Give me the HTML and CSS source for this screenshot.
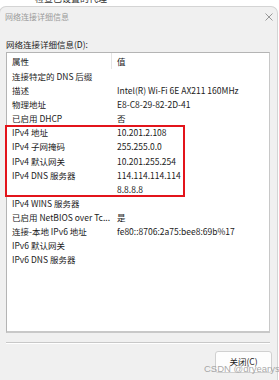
FILE: index.html
```html
<!DOCTYPE html>
<html lang="zh-CN">
<head>
    <meta charset="UTF-8">
    <meta name="viewport" content="width=device-width, initial-scale=1.0">
    <title>网络连接详细信息</title>
    <link rel="stylesheet" href="styles.css">
</head>
<body>
    <div class="behind"><span>检查已设置的代理…</span></div>

    <div class="dialog">
        <div class="titlebar">
            <span class="title">网络连接详细信息</span>
            <svg class="close" width="8" height="8" viewBox="0 0 8 8">
                <path d="M0.5 0.5 L7.5 7.5 M7.5 0.5 L0.5 7.5" stroke="#8c8c8c" stroke-width="0.9" fill="none"/>
            </svg>
        </div>

        <div class="content">
            <div class="caption">网络连接详细信息(D):</div>

            <div class="listbox">
                <div class="row head">
                    <div class="prop">属性</div>
                    <div class="val">值</div>
                </div>
                <div class="row"><div class="prop">连接特定的 DNS 后缀</div><div class="val"></div></div>
                <div class="row"><div class="prop">描述</div><div class="val">Intel(R) Wi-Fi 6E AX211 160MHz</div></div>
                <div class="row"><div class="prop">物理地址</div><div class="val">E8-C8-29-82-2D-41</div></div>
                <div class="row"><div class="prop">已启用 DHCP</div><div class="val">否</div></div>
                <div class="row"><div class="prop">IPv4 地址</div><div class="val">10.201.2.108</div></div>
                <div class="row"><div class="prop">IPv4 子网掩码</div><div class="val">255.255.0.0</div></div>
                <div class="row"><div class="prop">IPv4 默认网关</div><div class="val">10.201.255.254</div></div>
                <div class="row"><div class="prop">IPv4 DNS 服务器</div><div class="val">114.114.114.114</div></div>
                <div class="row"><div class="prop"></div><div class="val">8.8.8.8</div></div>
                <div class="row"><div class="prop">IPv4 WINS 服务器</div><div class="val"></div></div>
                <div class="row"><div class="prop">已启用 NetBIOS over Tc...</div><div class="val">是</div></div>
                <div class="row"><div class="prop">连接-本地 IPv6 地址</div><div class="val">fe80::8706:2a75:bee8:69b%17</div></div>
                <div class="row"><div class="prop">IPv6 默认网关</div><div class="val"></div></div>
                <div class="row"><div class="prop">IPv6 DNS 服务器</div><div class="val"></div></div>

                <div class="highlight"></div>
            </div>

            <div class="separator"></div>

            <div class="footer">
                <button class="btn">关闭(C)</button>
            </div>
        </div>
    </div>

    <div class="watermark">CSDN @dryearys</div>
</body>
</html>
```

FILE: styles.css
```css
* {
    box-sizing: border-box;
    margin: 0;
    padding: 0;
}

body {
    font-family: "Noto Sans CJK SC", "Noto Sans", sans-serif;
    font-size: 8.5px;
    color: #1b1b1b;
    background: #fff;
    width: 279px;
    height: 380px;
    overflow: hidden;
    position: relative;
}

.behind {
    height: 6px;
    overflow: hidden;
    padding-left: 35px;
}

.behind span {
    display: block;
    margin-top: -7px;
    font-size: 9px;
    line-height: 11px;
    color: #333;
}

.dialog {
    margin-left: -1px;
    width: 279px;
    height: 374px;
    overflow: hidden;
    background: #f0f0f0;
    border: 1px solid #d4d4d4;
    border-bottom: none;
    border-radius: 7px 7px 0 0;
}

.titlebar {
    height: 19px;
    display: flex;
    align-items: center;
    justify-content: space-between;
    padding: 0 4px 0 5px;
}

.title {
    font-size: 8px;
    color: #9a9a9a;
}

.close {
    margin-top: 1px;
}

.caption {
    margin: 12px 0 2px 6px;
    line-height: 12px;
}

.listbox {
    position: relative;
    margin-left: 6px;
    width: 264px;
    height: 281px;
    background: #fff;
    border: 1px solid #b4b4b4;
    border-right-color: #c8c8c8;
    border-bottom: 2px solid #c8c8c8;
}

.row {
    display: grid;
    grid-template-columns: 105px 1fr;
    height: 14.1px;
    line-height: 14.1px;
    white-space: nowrap;
}

.row.head {
    height: 16px;
    line-height: 16px;
}

.prop {
    padding-left: 5px;
    overflow: hidden;
}

.val {
    padding-left: 5px;
}

.head .prop {
    border-right: 1px solid #e5e5e5;
}

.highlight {
    position: absolute;
    left: -2px;
    top: 72px;
    width: 180px;
    height: 72px;
    border: 2px solid #e3141b;
}

.separator {
    margin: 9px 0 0 6px;
    width: 264px;
    height: 2px;
    border-top: 1px solid #c8c8c8;
    border-bottom: 1px solid #fff;
}

.footer {
    display: flex;
    justify-content: flex-end;
    padding: 7px 5px 0 0;
}

.btn {
    width: 57px;
    height: 22px;
    font-family: inherit;
    font-size: 8.5px;
    color: #1b1b1b;
    background: #fdfdfd;
    border: 1px solid #d0d0d0;
    border-radius: 3px;
    padding-bottom: 3px;
}

.watermark {
    position: absolute;
    left: 204px;
    top: 363px;
    white-space: nowrap;
    font-family: "Liberation Sans", sans-serif;
    font-size: 9.5px;
    line-height: 12px;
    color: rgba(140, 140, 140, 0.75);
}
```
